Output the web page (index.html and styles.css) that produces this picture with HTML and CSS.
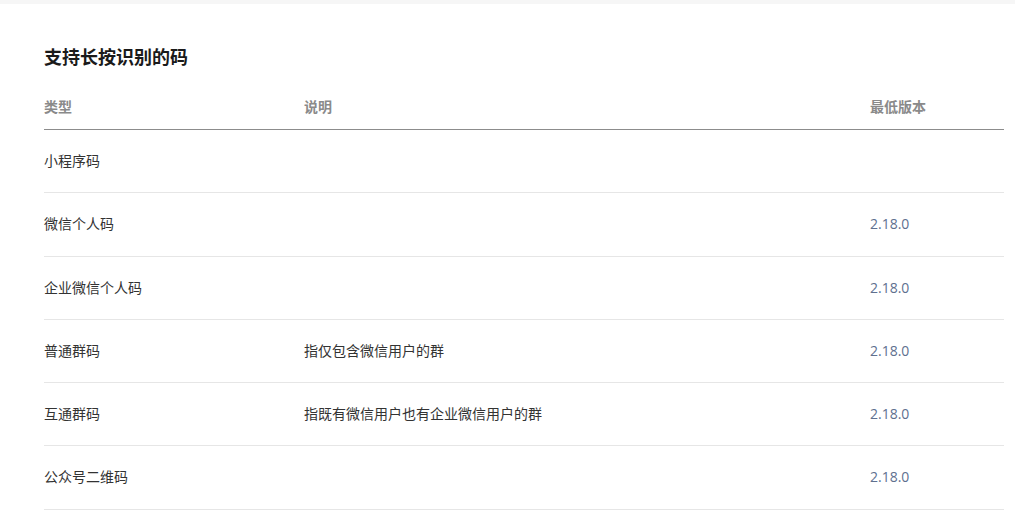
FILE: index.html
```html
<!DOCTYPE html>
<html lang="zh-CN">
<head>
<meta charset="utf-8">
<title>支持长按识别的码</title>
<link rel="stylesheet" href="styles.css">
</head>
<body>
<div class="topbar"></div>
<main class="content">
  <h2 class="title">支持长按识别的码</h2>
  <table class="codes">
    <colgroup>
      <col class="c-type">
      <col class="c-desc">
      <col class="c-ver">
    </colgroup>
    <thead>
      <tr><th>类型</th><th>说明</th><th>最低版本</th></tr>
    </thead>
    <tbody>
      <tr><td>小程序码</td><td></td><td></td></tr>
      <tr><td>微信个人码</td><td></td><td class="ver">2.18.0</td></tr>
      <tr><td>企业微信个人码</td><td></td><td class="ver">2.18.0</td></tr>
      <tr><td>普通群码</td><td>指仅包含微信用户的群</td><td class="ver">2.18.0</td></tr>
      <tr><td>互通群码</td><td>指既有微信用户也有企业微信用户的群</td><td class="ver">2.18.0</td></tr>
      <tr><td>公众号二维码</td><td></td><td class="ver">2.18.0</td></tr>
    </tbody>
  </table>
</main>
</body>
</html>
```
FILE: styles.css
```css
html, body {
  margin: 0;
  padding: 0;
  background: #fff;
}
body {
  font-family: "Noto Sans", "Noto Sans CJK SC", sans-serif;
  font-size: 14px;
  color: #333;
}
.topbar {
  height: 4px;
  background: #f6f6f6;
}
.content {
  padding: 0 11px 0 44px;
}
.title {
  margin: 41px 0 0;
  font-size: 18px;
  line-height: 24px;
  font-weight: 700;
  color: #1a1a1a;
}
.codes {
  width: 100%;
  margin-top: 27px;
  border-collapse: collapse;
  table-layout: fixed;
}
.c-type { width: 260px; }
.c-desc { width: 566px; }
.c-ver { width: 134px; }
.codes th {
  text-align: left;
  font-weight: 700;
  font-size: 14px;
  line-height: 22px;
  color: #8a8a8a;
  padding: 0 0 11px;
  border-bottom: 1px solid #8c8c8c;
}
.codes td {
  padding: 20px 0;
  line-height: 22.3px;
  border-bottom: 1px solid #e6e6e6;
  vertical-align: middle;
}
.codes td.ver {
  font-family: "Open Sans", "Noto Sans", sans-serif;
  color: #60708f;
}
```
